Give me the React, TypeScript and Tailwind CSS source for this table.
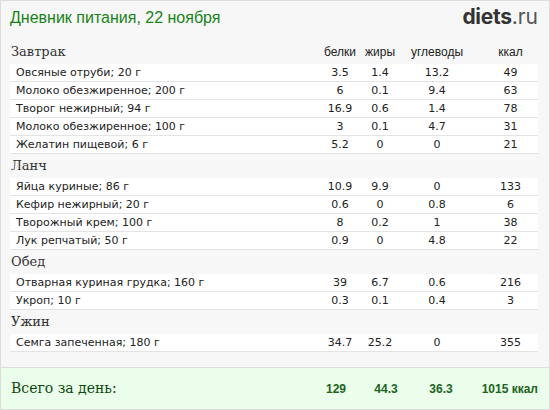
import React from "react";

type Item = { name: string; b: string; f: string; c: string; k: string };
type Meal = { title: string; items: Item[] };

const meals: Meal[] = [
  {
    title: "Завтрак",
    items: [
      { name: "Овсяные отруби; 20 г", b: "3.5", f: "1.4", c: "13.2", k: "49" },
      { name: "Молоко обезжиренное; 200 г", b: "6", f: "0.1", c: "9.4", k: "63" },
      { name: "Творог нежирный; 94 г", b: "16.9", f: "0.6", c: "1.4", k: "78" },
      { name: "Молоко обезжиренное; 100 г", b: "3", f: "0.1", c: "4.7", k: "31" },
      { name: "Желатин пищевой; 6 г", b: "5.2", f: "0", c: "0", k: "21" },
    ],
  },
  {
    title: "Ланч",
    items: [
      { name: "Яйца куриные; 86 г", b: "10.9", f: "9.9", c: "0", k: "133" },
      { name: "Кефир нежирный; 20 г", b: "0.6", f: "0", c: "0.8", k: "6" },
      { name: "Творожный крем; 100 г", b: "8", f: "0.2", c: "1", k: "38" },
      { name: "Лук репчатый; 50 г", b: "0.9", f: "0", c: "4.8", k: "22" },
    ],
  },
  {
    title: "Обед",
    items: [
      { name: "Отварная куриная грудка; 160 г", b: "39", f: "6.7", c: "0.6", k: "216" },
      { name: "Укроп; 10 г", b: "0.3", f: "0.1", c: "0.4", k: "3" },
    ],
  },
  {
    title: "Ужин",
    items: [{ name: "Семга запеченная; 180 г", b: "34.7", f: "25.2", c: "0", k: "355" }],
  },
];

const sans = { fontFamily: '"DejaVu Sans", Verdana, sans-serif' };
const serif = { fontFamily: '"DejaVu Serif", Georgia, serif' };
const arial = { fontFamily: '"Liberation Sans", Arial, sans-serif' };

function Cols({ b, f, c, k, cls }: { b: string; f: string; c: string; k: string; cls: string }) {
  return (
    <>
      <div className={`w-[46px] text-center ${cls}`}>{b}</div>
      <div className={`w-[34px] text-center ${cls}`}>{f}</div>
      <div className={`w-[80px] text-center ${cls}`}>{c}</div>
      <div className={`w-[61px] pl-[6px] text-center ${cls}`}>{k}</div>
    </>
  );
}

export default function App() {
  return (
    <div className="w-[550px] h-[410px] border border-[#dcdcdc] bg-[#f7f7f7] flex flex-col overflow-hidden">
      <div className="h-[39px] flex items-start justify-between pl-[9px] pr-[11px]">
        <div className="text-[16px] leading-[20px] mt-[7px] text-[#178317]" style={arial}>
          Дневник питания, 22 ноября
        </div>
        <div
          className="text-[21px] leading-[24px] mt-[4px] text-[#333]"
          style={{ fontFamily: 'Inter, "Liberation Sans", sans-serif' }}
        >
          <span className="font-bold tracking-[-0.3px]">diets</span>
          <span className="text-[#555]">.ru</span>
        </div>
      </div>
      <div className="flex-1 pl-[9px] pr-[11px]">
        {meals.map((m, mi) => (
          <div key={mi}>
            <div className="h-[24px] flex items-end pb-[3px]">
              <div className="flex-1 pl-[1px] text-[13px] leading-[18px] text-[#333]" style={serif}>
                {m.title}
              </div>
              {mi === 0 && (
                <div className="flex leading-[18px] text-[#222]" style={arial}>
                  <Cols b="белки" f="жиры" c="углеводы" k="ккал" cls="text-[12px]" />
                </div>
              )}
            </div>
            {m.items.map((it, ii) => (
              <div
                key={ii}
                className="h-[18px] bg-white border-b border-[#e4e4e4] flex items-center text-[11px] leading-[17px] text-[#222]"
                style={sans}
              >
                <div className="flex-1 pl-[6px]">{it.name}</div>
                <Cols b={it.b} f={it.f} c={it.c} k={it.k} cls="" />
              </div>
            ))}
          </div>
        ))}
      </div>
      <div className="h-[42px] border-t border-[#dcdcdc] bg-[#ebfdeb] flex items-center pl-[10px] pr-[11px]">
        <div className="flex-1 text-[14px] text-[#0b4a0b]" style={serif}>
          Всего за день:
        </div>
        <div className="flex text-[12px] font-bold text-[#1c651c]" style={arial}>
          <div className="w-[40px] text-center">129</div>
          <div className="w-[60px] text-center">44.3</div>
          <div className="w-[50px] text-center">36.3</div>
          <div className="w-[72px] text-right">1015 ккал</div>
        </div>
      </div>
    </div>
  );
}
